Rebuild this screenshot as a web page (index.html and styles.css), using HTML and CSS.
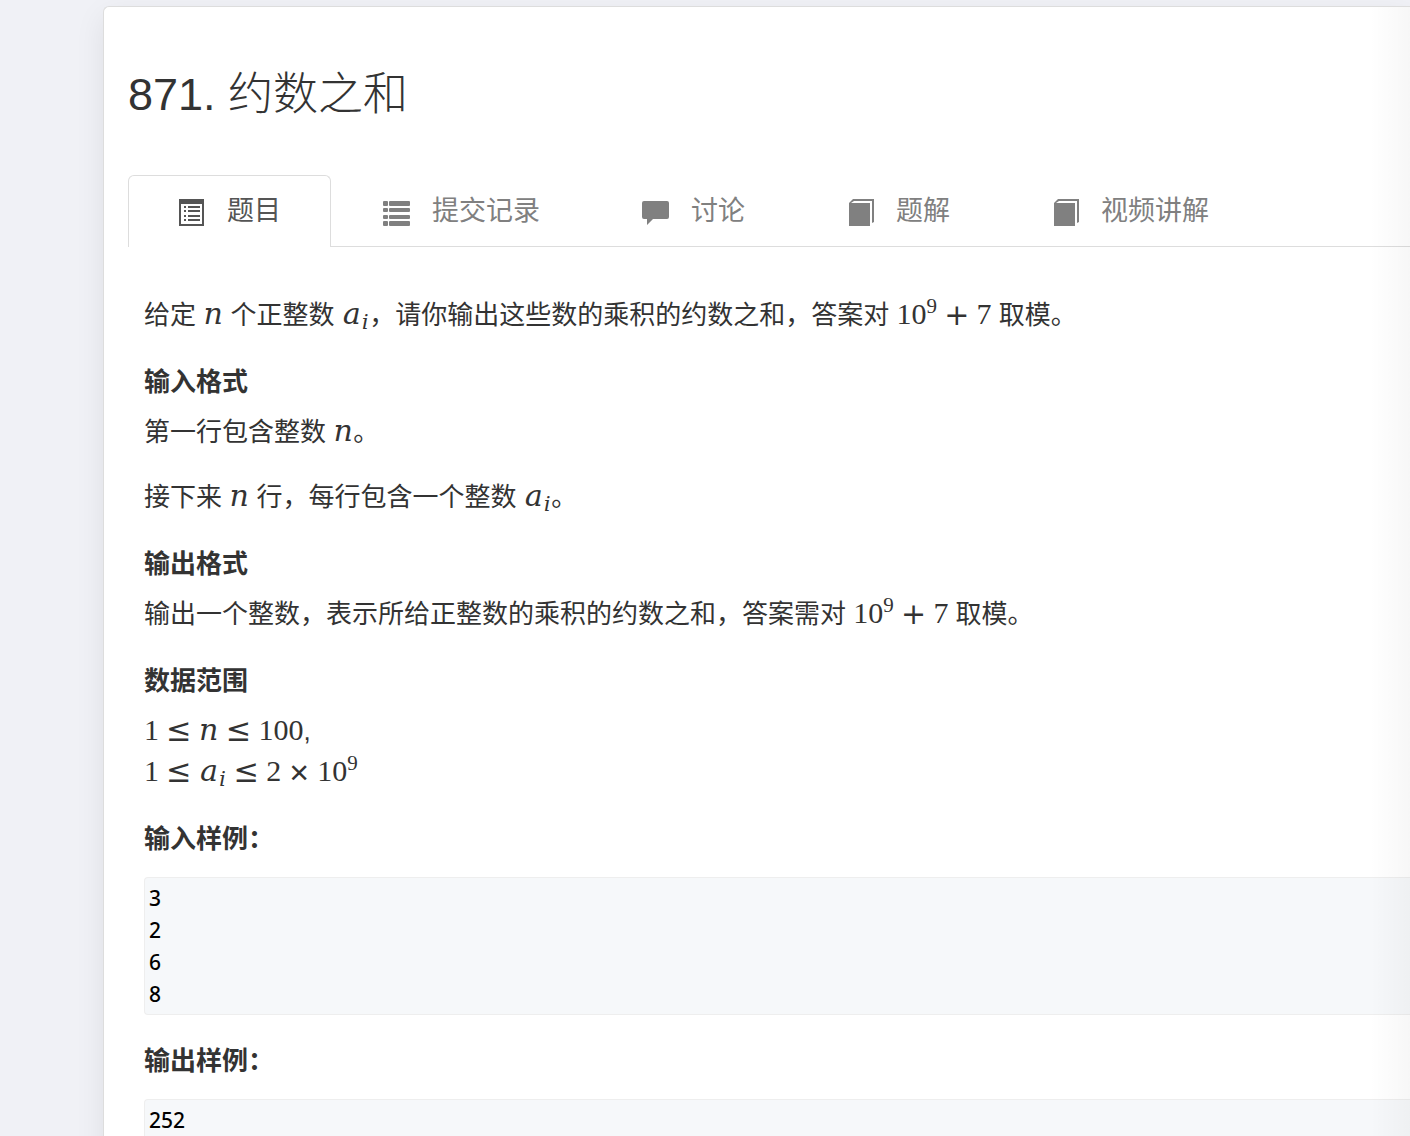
FILE: index.html
```html
<!DOCTYPE html>
<html lang="zh-CN">
<head>
  <meta charset="UTF-8">
  <meta name="viewport" content="width=device-width, initial-scale=1.0">
  <title>871. 约数之和</title>
  <link rel="stylesheet" href="styles.css">
</head>
<body>
  <main class="panel">
    <h1>871. 约数之和</h1>
    <nav class="tabs">
      <a class="tab active" href="#problem">
        <svg class="icon" viewBox="0 0 27 28"><path fill-rule="evenodd" d="M1 1h25v27H1zM3 6v20h21V6z"/><path d="M6 8h2v2H6zM6 12h2v2H6zM6 17h2v2H6zM6 21h2v2H6zM10 8h12v2H10zM10 12h12v2H10zM10 17h12v2H10zM10 21h12v2H10z"/></svg>
        题目
      </a>
      <a class="tab" href="#submissions">
        <svg class="icon" viewBox="0 0 27 28"><rect y="3" width="5" height="5" rx="1"/><rect y="10" width="5" height="4" rx="1"/><rect y="17" width="5" height="4" rx="1"/><rect y="23" width="5" height="5" rx="1"/><rect x="6" y="3" width="21" height="5" rx="1"/><rect x="6" y="10" width="21" height="4" rx="1"/><rect x="6" y="17" width="21" height="4" rx="1"/><rect x="6" y="23" width="21" height="5" rx="1"/></svg>
        提交记录
      </a>
      <a class="tab" href="#discussion">
        <svg class="icon" viewBox="0 0 27 28"><path d="M2 3h23q2 0 2 2v14q0 2-2 2H11l-6 6v-6H2q-2 0-2-2V5q0-2 2-2z"/></svg>
        讨论
      </a>
      <a class="tab" href="#solution">
        <svg class="icon" viewBox="0 0 27 28"><path d="M6 1h21v23l-2 1V3H7L4 5h19v23H2V5z"/></svg>
        题解
      </a>
      <a class="tab" href="#video">
        <svg class="icon" viewBox="0 0 27 28"><path d="M6 1h21v23l-2 1V3H7L4 5h19v23H2V5z"/></svg>
        视频讲解
      </a>
    </nav>
    <article class="content" id="problem">
      <p>给定 <span class="math"><var>𝑛</var></span> 个正整数 <span class="math"><var>𝑎<sub>𝑖</sub></var></span>，请你输出这些数的乘积的约数之和，答案对 <span class="math">10<sup>9</sup><span class="op">+</span>7</span> 取模。</p>

      <h4>输入格式</h4>
      <p>第一行包含整数 <span class="math"><var>𝑛</var></span>。</p>
      <p>接下来 <span class="math"><var>𝑛</var></span> 行，每行包含一个整数 <span class="math"><var>𝑎<sub>𝑖</sub></var></span>。</p>

      <h4>输出格式</h4>
      <p>输出一个整数，表示所给正整数的乘积的约数之和，答案需对 <span class="math">10<sup>9</sup><span class="op">+</span>7</span> 取模。</p>

      <h4>数据范围</h4>
      <p>
        <span class="math">1<span class="op">≤</span><var>𝑛</var><span class="op">≤</span>100</span>,<br>
        <span class="math">1<span class="op">≤</span><var>𝑎<sub>𝑖</sub></var><span class="op">≤</span>2<span class="op">×</span>10<sup>9</sup></span>
      </p>

      <h4>输入样例：</h4>
<pre><code>3
2
6
8
</code></pre>

      <h4>输出样例：</h4>
<pre><code>252
</code></pre>
    </article>
  </main>
</body>
</html>
```

FILE: styles.css
```css
* {
  box-sizing: border-box;
}

body {
  margin: 0;
  padding: 6px 0 0 103px;
  background: #f0f1f6;
  color: #333;
  font-family: "Liberation Sans", "Noto Sans CJK SC", sans-serif;
  font-size: 26px;
  line-height: 41px;
}

.panel {
  position: relative;
  padding: 57px 0 0 24px;
  background: #fff;
  border: 1px solid #ddd;
  border-right: 0;
  border-radius: 6px 0 0 0;
  box-shadow: 0 10px 30px rgba(0, 0, 0, 0.08);
}

/* soft shade along the right edge */
.panel::after {
  content: "";
  position: absolute;
  top: 0;
  right: 0;
  bottom: 0;
  width: 40px;
  background: linear-gradient(to right, transparent, rgba(0, 0, 0, 0.03));
  pointer-events: none;
}

h1 {
  margin: 0 0 49px;
  font-size: 45px;
  font-weight: 300;
  line-height: 62px;
}

.tabs {
  display: flex;
  gap: 2px;
  border-bottom: 1px solid #ddd;
}

.tab {
  display: flex;
  align-items: center;
  gap: 22px;
  height: 72px;
  margin-bottom: -1px;
  padding: 0 49px;
  border: 1px solid transparent;
  border-bottom: 0;
  border-radius: 6px 6px 0 0;
  color: #808080;
  font-size: 27px;
  text-decoration: none;
}

.tab.active {
  background: #fff;
  border-color: #ddd;
  color: #555;
}

.icon {
  width: 27px;
  height: 28px;
  fill: currentColor;
}

.content {
  padding: 48px 0 0 16px;
}

p {
  margin: 0 0 24px;
}

h4 {
  margin: 32px 0 16px;
  font-size: 26px;
  font-weight: 700;
  line-height: 28px;
}

.math {
  font-family: "Liberation Serif", "DejaVu Math TeX Gyre", serif;
  font-size: 30px;
  line-height: 0;
}

.math var {
  font-style: normal;
}

.math sub,
.math sup {
  font-size: 21px;
  line-height: 0;
}

.math sub {
  vertical-align: -5px;
}

.math .op {
  margin: 0 8px;
  font-family: "DejaVu Math TeX Gyre", "Liberation Serif", serif;
}

pre {
  margin: 24px 0;
  padding: 4px;
  background: #f6f8fa;
  border: 1px solid #eee;
  border-right: 0;
  border-radius: 4px 0 0 4px;
  color: #000;
  font-family: "Noto Sans", sans-serif;
  font-size: 21px;
  font-weight: 500;
  line-height: 32px;
}

code {
  font: inherit;
}
```
